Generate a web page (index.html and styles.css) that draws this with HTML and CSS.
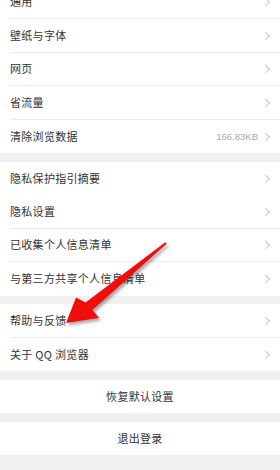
FILE: index.html
```html
<!DOCTYPE html>
<html lang="zh">
<head>
<meta charset="utf-8">
<link rel="stylesheet" href="styles.css">
</head>
<body>
<div class="page">
  <div class="group first">
    <div class="row"><span class="label">通用</span><span class="chev"></span></div>
    <div class="row"><span class="label">壁纸与字体</span><span class="chev"></span></div>
    <div class="row"><span class="label">网页</span><span class="chev"></span></div>
    <div class="row"><span class="label">省流量</span><span class="chev"></span></div>
    <div class="row"><span class="label">清除浏览数据</span><span class="value">166.83KB</span><span class="chev"></span></div>
  </div>
  <div class="group">
    <div class="row noline"><span class="label">隐私保护指引摘要</span><span class="chev"></span></div>
    <div class="row"><span class="label">隐私设置</span><span class="chev"></span></div>
    <div class="row"><span class="label">已收集个人信息清单</span><span class="chev"></span></div>
    <div class="row"><span class="label">与第三方共享个人信息清单</span><span class="chev"></span></div>
  </div>
  <div class="group">
    <div class="row"><span class="label">帮助与反馈</span><span class="chev"></span></div>
    <div class="row"><span class="label">关于 QQ 浏览器</span><span class="chev"></span></div>
  </div>
  <div class="group">
    <div class="row center"><span class="label">恢复默认设置</span></div>
  </div>
  <div class="group">
    <div class="row center"><span class="label">退出登录</span></div>
  </div>
</div>
<svg class="arrow" width="280" height="470" viewBox="0 0 280 470">
  <defs>
    <filter id="sh" x="-20%" y="-20%" width="140%" height="140%">
      <feDropShadow dx="2" dy="2.5" stdDeviation="1.8" flood-color="#000" flood-opacity="0.35"/>
    </filter>
  </defs>
  <polygon filter="url(#sh)" fill="#f2100f" points="66,323 76,297.5 85.5,302.5 165.3,242.2 166.7,243.8 92.5,310 99,318"/>
</svg>
</body>
</html>
```
FILE: styles.css
```css
html, body {
  margin: 0;
  padding: 0;
  background: #f0f0f0;
}
body {
  width: 280px;
  height: 470px;
  overflow: hidden;
  position: relative;
  font-family: "Noto Sans CJK SC", "Noto Sans", sans-serif;
}
.page {
  display: flex;
  flex-direction: column;
  gap: 8.5px;
  margin-top: -14.5px;
}
.group {
  background: #fff;
  padding-left: 10px;
}
.row {
  height: 33.5px;
  box-sizing: border-box;
  display: flex;
  align-items: center;
  padding-right: 11px;
  border-bottom: 1px solid #ececec;
  color: #333;
}
.row:last-child, .row.noline {
  border-bottom: none;
}
.label {
  flex: 1;
  font-size: 11px;
  letter-spacing: 0.3px;
  line-height: 1;
}
.value {
  font-size: 9.5px;
  color: #a8a8a8;
  margin-right: 7px;
  font-family: "Liberation Sans", "Noto Sans", sans-serif;
}
.chev {
  width: 4px;
  height: 7px;
  position: relative;
}
.chev::before {
  content: "";
  position: absolute;
  left: -2.5px;
  top: 1px;
  width: 4.5px;
  height: 4.5px;
  border-top: 1px solid #c4c4c4;
  border-right: 1px solid #c4c4c4;
  transform: rotate(45deg);
}
.row.center {
  justify-content: center;
  padding-right: 10px;
}
.row.center .label {
  flex: none;
}
.arrow {
  position: absolute;
  left: 0;
  top: 0;
  pointer-events: none;
}
```
